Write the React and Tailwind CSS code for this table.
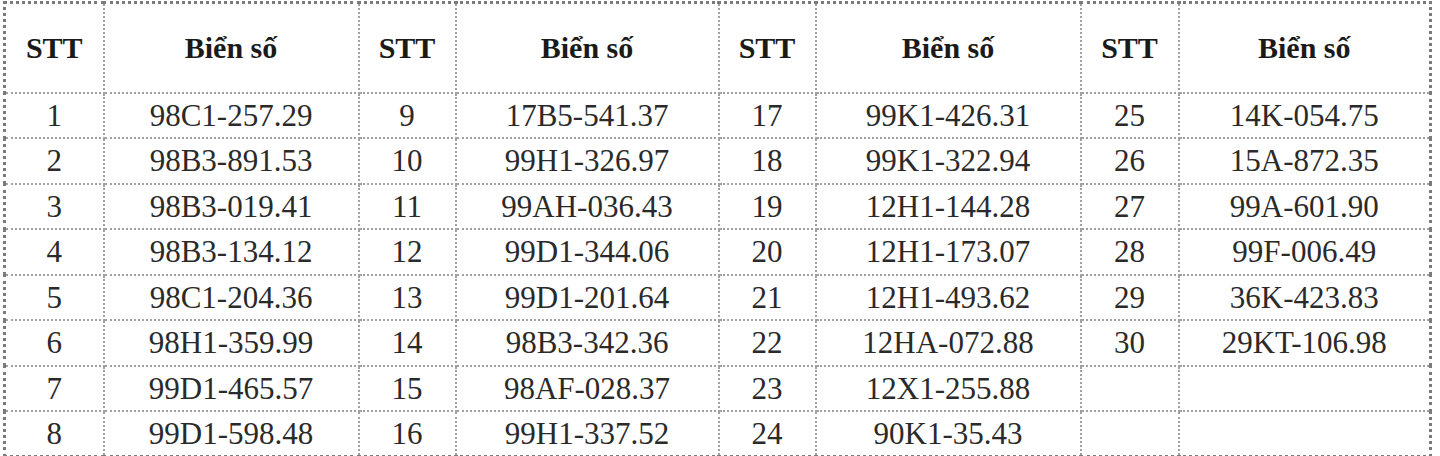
const rows = [
  ["1", "98C1-257.29", "9", "17B5-541.37", "17", "99K1-426.31", "25", "14K-054.75"],
  ["2", "98B3-891.53", "10", "99H1-326.97", "18", "99K1-322.94", "26", "15A-872.35"],
  ["3", "98B3-019.41", "11", "99AH-036.43", "19", "12H1-144.28", "27", "99A-601.90"],
  ["4", "98B3-134.12", "12", "99D1-344.06", "20", "12H1-173.07", "28", "99F-006.49"],
  ["5", "98C1-204.36", "13", "99D1-201.64", "21", "12H1-493.62", "29", "36K-423.83"],
  ["6", "98H1-359.99", "14", "98B3-342.36", "22", "12HA-072.88", "30", "29KT-106.98"],
  ["7", "99D1-465.57", "15", "98AF-028.37", "23", "12X1-255.88", "", ""],
  ["8", "99D1-598.48", "16", "99H1-337.52", "24", "90K1-35.43", "", ""],
];

const widths = ["w-[99px]", "w-[255px]", "w-[97px]", "w-[263px]", "w-[97px]", "w-[265px]", "w-[98px]", "w-[252px]"];

export default function App() {
  return (
    <div className="bg-white w-[1440px] h-[456px] overflow-hidden pl-[3px] pt-[1px] font-['Liberation_Serif','Times_New_Roman',serif] text-[#1a1a1a]">
      <table className="border-collapse table-fixed w-[1428px] border-[3px] border-dotted border-[#7a7a7a]">
        <colgroup>
          {widths.map((w, i) => (
            <col key={i} className={w} />
          ))}
        </colgroup>
        <thead>
          <tr className="h-[90px]">
            {["STT", "Biển số", "STT", "Biển số", "STT", "Biển số", "STT", "Biển số"].map((h, i) => (
              <th key={i} className="border-2 border-dotted border-[#a0a0a0] text-[30px] font-bold text-center align-middle">
                {h}
              </th>
            ))}
          </tr>
        </thead>
        <tbody>
          {rows.map((r, ri) => (
            <tr key={ri} className="h-[45.5px]">
              {r.map((c, ci) => (
                <td key={ci} className="border-2 border-dotted border-[#a0a0a0] text-[31px] text-center align-middle leading-none text-[#2a2a2a]">
                  {c}
                </td>
              ))}
            </tr>
          ))}
        </tbody>
      </table>
    </div>
  );
}
